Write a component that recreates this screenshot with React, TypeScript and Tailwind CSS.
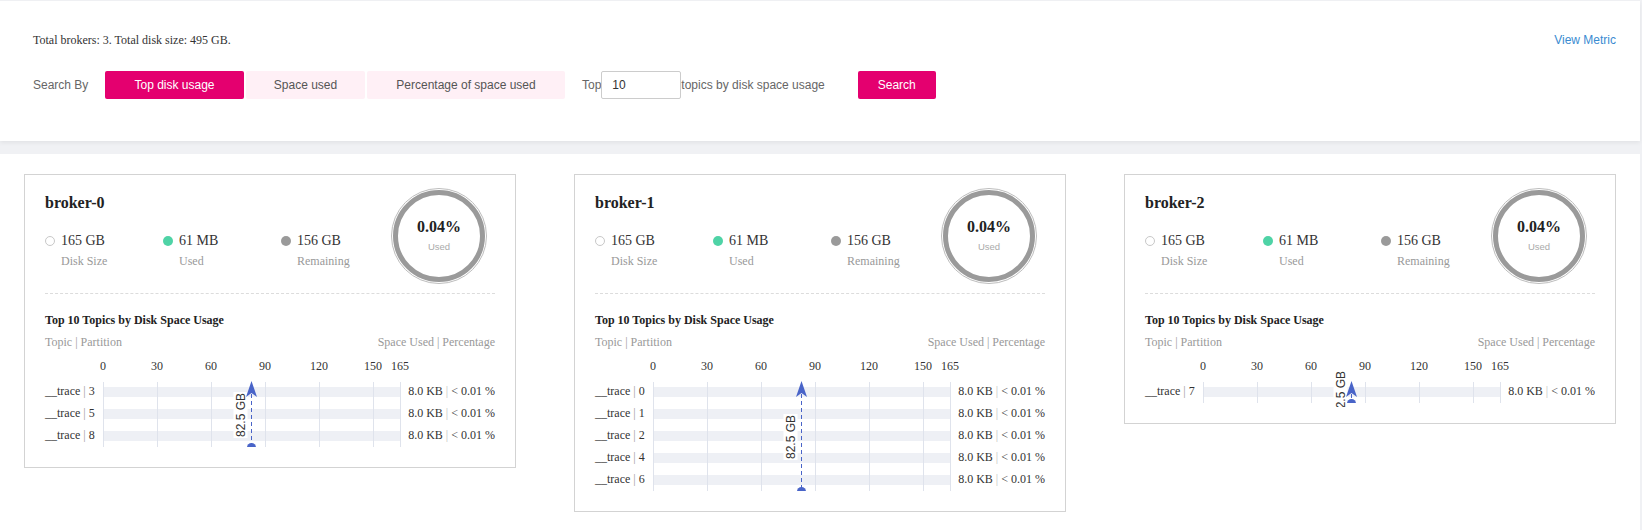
import React from "react";

const SERIF = "font-['Liberation_Serif',serif]";
const SANS = "font-['Liberation_Sans',Arial,sans-serif]";

const W = 297;
const MAXV = 165;
const TICKS = [0, 30, 60, 90, 120, 150, 165];
const MARK = 82.5;
const BLUE = "#4964c8";

function Ring() {
  return (
    <div className="relative w-[96px] h-[96px] mr-[8px] shrink-0">
      <svg className="absolute inset-0" width={96} height={96}>
        <circle cx={48} cy={48} r={47.5} fill="none" stroke="#bdbdbd" strokeWidth={1} />
        <circle cx={48} cy={48} r={43.5} fill="none" stroke="#9a9a9a" strokeWidth={5} />
      </svg>
      <div className="relative flex flex-col items-center pt-[30px]">
        <span className={`${SERIF} text-[16px] leading-[18px] font-bold text-[#222]`}>0.04%</span>
        <span className={`${SANS} mt-[5px] text-[9.5px] leading-[12px] text-[#aaa]`}>Used</span>
      </div>
    </div>
  );
}

function Legend({ dot, value, label, w }: { dot: string; value: string; label: string; w: string }) {
  return (
    <div className={w}>
      <div className="flex items-center h-[20px]">
        <span className={`w-[10px] h-[10px] rounded-full mr-[6px] shrink-0 ${dot}`} />
        <span className={`${SERIF} text-[14px] leading-[20px] text-[#333] whitespace-nowrap`}>{value}</span>
      </div>
      <div className={`${SERIF} pl-[16px] text-[12px] leading-[20px] text-[#999] whitespace-nowrap`}>{label}</div>
    </div>
  );
}

function Chart({ id, rows }: { id: string; rows: number[] }) {
  const n = rows.length;
  const H = 22 + 22 * n + 1;
  const sc = W / MAXV;
  const mx = MARK * sc;
  const labelCY = 22 + 11 * n + 2;
  return (
    <svg width={W} height={H} className="block shrink-0" style={{ overflow: "visible" }}>
      <defs>
        <clipPath id={`clip-${id}`}>
          <rect x={-20} y={0} width={W + 40} height={H} />
        </clipPath>
        <clipPath id={`clipl-${id}`}>
          <rect x={-20} y={0} width={W + 40} height={H + 4} />
        </clipPath>
      </defs>
      {TICKS.map((v) => (
        <text
          key={v}
          x={v * sc}
          y={12}
          textAnchor="middle"
          fontSize={12}
          fontFamily="'Liberation Serif', serif"
          fill="#333"
        >
          {v}
        </text>
      ))}
      {rows.map((r, i) => (
        <rect key={r} x={0} y={22 + 22 * i + 7} width={W} height={10} fill="#eef0f5" />
      ))}
      {TICKS.map((v) => (
        <line
          key={v}
          x1={Math.round(v * sc) + 0.5}
          x2={Math.round(v * sc) + 0.5}
          y1={24}
          y2={H}
          stroke="#dfe3ec"
          strokeWidth={1}
        />
      ))}
      <g clipPath={`url(#clipl-${id})`}>
        <g transform={`translate(${mx - 11} ${labelCY}) rotate(-90)`}>
          <rect x={-23} y={-7} width={46} height={14} fill="#fff" />
          <text
            x={0}
            y={4.5}
            textAnchor="middle"
            fontSize={12}
            fontFamily="'Liberation Sans', Arial, sans-serif"
            fill="#333"
          >
            82.5 GB
          </text>
        </g>
      </g>
      <g clipPath={`url(#clip-${id})`}>
        <line x1={mx} x2={mx} y1={36} y2={H} stroke={BLUE} strokeWidth={1} strokeDasharray="4 3" />
        <path d={`M${mx} 23 L${mx + 5.5} 39 L${mx} 35 L${mx - 5.5} 39 Z`} fill={BLUE} />
        <circle cx={mx} cy={H + 0.5} r={4.5} fill={BLUE} />
      </g>
    </svg>
  );
}

function BrokerCard({ name, rows }: { name: string; rows: number[] }) {
  return (
    <div className={`${SERIF} w-[492px] border border-[#d3d3d3] bg-white px-[20px] pb-[20px]`}>
      <div className="flex justify-between h-[118px] pt-[13px]">
        <div className="pt-[6px]">
          <div className="text-[16px] leading-[18px] font-bold text-[#222]">{name}</div>
          <div className="mt-[19px] flex">
            <Legend w="w-[118px]" dot="border border-[#c8c8c8] bg-white" value="165 GB" label="Disk Size" />
            <Legend w="w-[118px]" dot="bg-[#4fd3a6]" value="61 MB" label="Used" />
            <Legend w="" dot="bg-[#9a9a9a]" value="156 GB" label="Remaining" />
          </div>
        </div>
        <Ring />
      </div>
      <div className="border-t border-dashed border-[#dcdcdc]" />
      <div className="pt-[18px]">
        <div className="text-[12px] leading-[16px] font-bold text-[#222]">Top 10 Topics by Disk Space Usage</div>
        <div className="mt-[6px] flex justify-between text-[12px] leading-[16px] text-[#999]">
          <span>Topic | Partition</span>
          <span>Space Used | Percentage</span>
        </div>
        <div className="mt-[8px] flex">
          <div className="w-[58px] shrink-0 pt-[22px]">
            {rows.map((p) => (
              <div key={p} className="h-[22px] leading-[22px] text-[12px] text-[#333] whitespace-nowrap">
                __trace<span className="text-[#999]"> | </span>
                {p}
              </div>
            ))}
          </div>
          <Chart id={name} rows={rows} />
          <div className="flex-1 pt-[22px] text-right">
            {rows.map((p) => (
              <div key={p} className="h-[22px] leading-[22px] text-[12px] text-[#333] whitespace-nowrap">
                8.0 KB<span className="text-[#c4c4c4]"> | </span>&lt; 0.01 %
              </div>
            ))}
          </div>
        </div>
      </div>
    </div>
  );
}

export default function App() {
  return (
    <div className="min-h-[530px] w-[1642px] bg-[#f0f1f4] pt-px">
      <div className="h-[140px] w-[1640px] bg-white shadow-[0_2px_4px_rgba(0,0,0,0.06)] pl-[33px] pr-[24px] pt-[31px]">
        <div className="flex items-center justify-between h-[16px]">
          <span className={`${SERIF} text-[12px] leading-[16px] text-[#333]`}>
            Total brokers: 3. Total disk size: 495 GB.
          </span>
          <span className={`${SANS} text-[12px] leading-[16px] text-[#3a8bd1]`}>View Metric</span>
        </div>
        <div className={`${SANS} mt-[23px] flex items-center h-[28px] text-[12px]`}>
          <span className="w-[72px] text-[#666]">Search By</span>
          <button className="w-[139px] h-[28px] rounded-[2px] bg-[#e4006f] text-white">Top disk usage</button>
          <button className="ml-[2px] w-[119px] h-[28px] rounded-[2px] bg-[#fff0f6] text-[#555]">Space used</button>
          <button className="ml-[2px] w-[198px] h-[28px] rounded-[2px] bg-[#fff0f6] text-[#555]">
            Percentage of space used
          </button>
          <span className="ml-[17px] text-[#666]">Top</span>
          <input
            defaultValue="10"
            className="w-[80px] h-[28px] border border-[#cccccc] rounded-[2px] pl-[10px] text-[12px] text-[#333] outline-none"
          />
          <span className="text-[#666]">topics by disk space usage</span>
          <button className="ml-[33px] w-[78px] h-[28px] rounded-[2px] bg-[#e4006f] text-white">Search</button>
        </div>
      </div>
      <div className="mt-[13px] w-[1640px] min-h-[376px] bg-white px-[24px] pt-[20px] flex items-start justify-between">
        <BrokerCard name="broker-0" rows={[3, 5, 8]} />
        <BrokerCard name="broker-1" rows={[0, 1, 2, 4, 6]} />
        <BrokerCard name="broker-2" rows={[7]} />
      </div>
    </div>
  );
}
